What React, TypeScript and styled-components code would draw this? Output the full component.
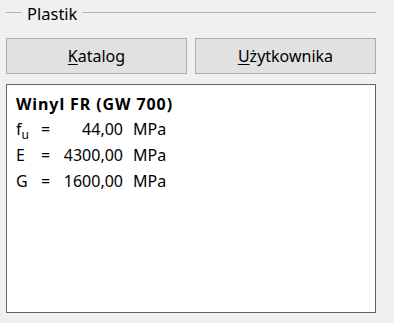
import React from "react";
import styled, { createGlobalStyle } from "styled-components";

const GlobalStyle = createGlobalStyle`
  html, body {
    margin: 0;
    padding: 0;
    background: #f0f0f0;
  }
  body {
    font-family: "Noto Sans", "Open Sans", sans-serif;
    font-size: 16px;
    color: #000;
  }
  * {
    box-sizing: border-box;
  }
`;

const Panel = styled.div`
  width: 394px;
  padding: 0 18px 0 6px;
`;

const Legend = styled.div`
  display: flex;
  align-items: center;
  height: 25px;
  &::before,
  &::after {
    content: "";
    height: 1px;
    background: #b4b4b4;
  }
  &::before {
    width: 16px;
  }
  &::after {
    flex: 1;
  }
`;

const LegendText = styled.span`
  padding: 0 5px;
  line-height: 25px;
  margin-top: 1px;
  font-size: 16.5px;
`;

const ButtonRow = styled.div`
  display: grid;
  grid-template-columns: 1fr 1fr;
  column-gap: 8px;
  margin-top: 13px;
`;

const Button = styled.button`
  height: 36px;
  background: #e1e1e1;
  border: 1px solid #adadad;
  font-family: inherit;
  font-size: 16px;
  color: #000;
  padding: 0;
  u {
    text-underline-offset: 2px;
  }
`;

const InfoBox = styled.div`
  margin-top: 10px;
  height: 229px;
  background: #fff;
  border: 1px solid #646464;
  padding: 7px 9px;
`;

const Title = styled.div`
  font-weight: 700;
  line-height: 24px;
  letter-spacing: 0.9px;
`;

const Props = styled.div`
  display: grid;
  grid-template-columns: 25px 19px 63px auto;
  grid-auto-rows: 26px;
  align-items: center;
`;

const Value = styled.span`
  justify-self: end;
`;

const Unit = styled.span`
  padding-left: 10px;
`;

const Sub = styled.sub`
  font-size: 12px;
  vertical-align: -4px;
  line-height: 0;
`;

const rows = [
  { label: <>f<Sub>u</Sub></>, value: "44,00" },
  { label: "E", value: "4300,00" },
  { label: "G", value: "1600,00" },
];

export default function App() {
  return (
    <>
      <GlobalStyle />
      <Panel>
        <Legend>
          <LegendText>Plastik</LegendText>
        </Legend>
        <ButtonRow>
          <Button>
            <u>K</u>atalog
          </Button>
          <Button>
            <u>U</u>żytkownika
          </Button>
        </ButtonRow>
        <InfoBox>
          <Title>Winyl FR (GW 700)</Title>
          <Props>
            {rows.map((r, i) => (
              <React.Fragment key={i}>
                <span>{r.label}</span>
                <span>=</span>
                <Value>{r.value}</Value>
                <Unit>MPa</Unit>
              </React.Fragment>
            ))}
          </Props>
        </InfoBox>
      </Panel>
    </>
  );
}
